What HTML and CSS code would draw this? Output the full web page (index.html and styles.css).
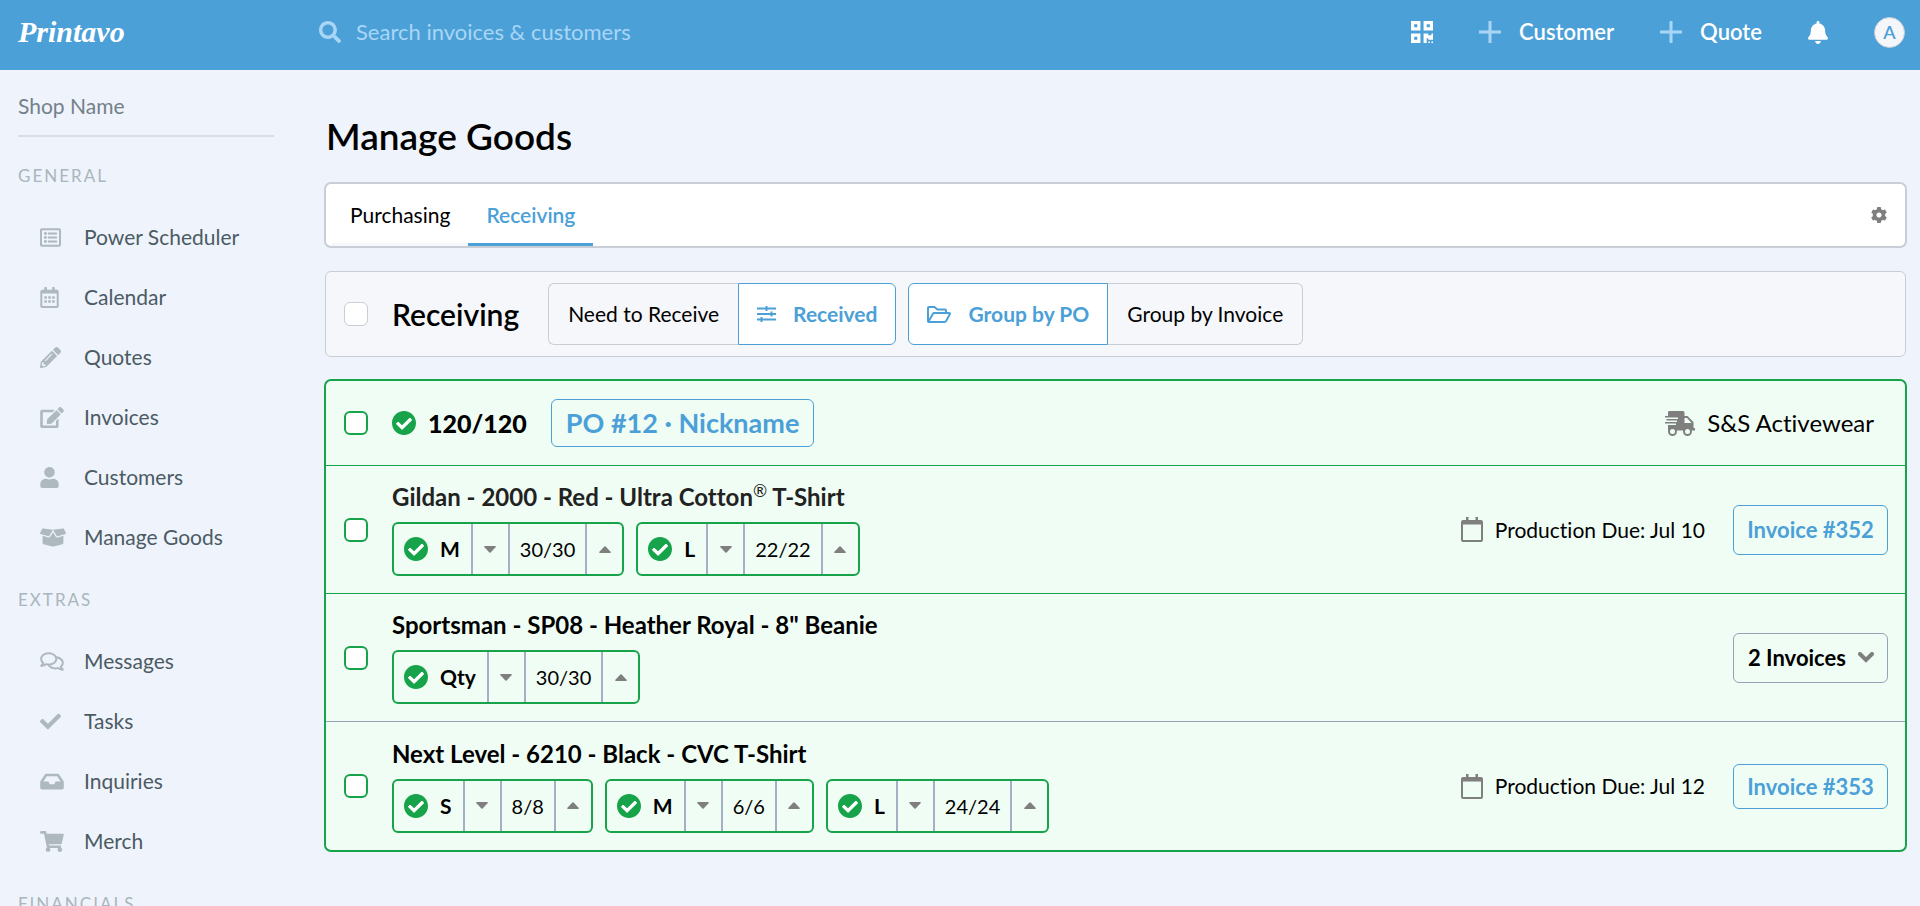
FILE: index.html
```html
<!DOCTYPE html>
<html lang="en">
<head>
<meta charset="utf-8">
<title>Manage Goods</title>
<link rel="stylesheet" href="styles.css">
</head>
<body>
<svg class="sprite" aria-hidden="true">
  <symbol id="check-circle" viewBox="8 8 496 496"><path d="M504 256c0 136.967-111.033 248-248 248S8 392.967 8 256 119.033 8 256 8s248 111.033 248 248zM227.314 387.314l184-184c6.248-6.248 6.248-16.379 0-22.627l-22.627-22.627c-6.248-6.249-16.379-6.249-22.628 0L216 308.118l-70.059-70.059c-6.248-6.248-16.379-6.248-22.628 0l-22.627 22.627c-6.248 6.248-6.248 16.379 0 22.627l104 104c6.249 6.249 16.379 6.249 22.628.001z"/><path fill="#fff" d="M227.314 387.314l184-184c6.248-6.248 6.248-16.379 0-22.627l-22.627-22.627c-6.248-6.249-16.379-6.249-22.628 0L216 308.118l-70.059-70.059c-6.248-6.248-16.379-6.248-22.628 0l-22.627 22.627c-6.248 6.248-6.248 16.379 0 22.627l104 104c6.249 6.249 16.379 6.249 22.628.001z"/></symbol>
  <symbol id="calendar" viewBox="0 0 22 25"><path fill-rule="evenodd" d="M5 0h2.500v3h7V0H17v3h3a2 2 0 0 1 2 2v18a2 2 0 0 1-2 2H2a2 2 0 0 1-2-2V5a2 2 0 0 1 2-2h3zM2 7.500V23h18V7.500z"/></symbol>
  <symbol id="plus" viewBox="0 0 22 22"><path d="M9.500 0h3v9.500H22v3h-9.500V22h-3v-9.500H0v-3h9.500z"/></symbol>
  <symbol id="down" viewBox="0 0 12 7"><path d="M1 0h10c.8 0 1.200.8.6 1.300L6.600 6.600a.9.9 0 0 1-1.200 0L.4 1.300C-.2.8.2 0 1 0z"/></symbol>
  <symbol id="up" viewBox="0 0 12 7"><path d="M1 7h10c.8 0 1.200-.8.6-1.300L6.600.4a.9.9 0 0 0-1.200 0l-5 5.300C-.2 6.200.2 7 1 7z"/></symbol>
</svg>

<header class="topbar">
  <a class="logo" href="#">Printavo</a>
  <label class="search">
    <svg class="search-icon" viewBox="0 0 512 512" aria-hidden="true"><path d="M505 442.7L405.300 343c-4.500-4.500-10.600-7-17-7H372c27.600-35.300 44-79.700 44-128C416 93.100 322.900 0 208 0S0 93.100 0 208s93.100 208 208 208c48.300 0 92.700-16.400 128-44v16.300c0 6.400 2.500 12.500 7 17l99.700 99.700c9.400 9.400 24.600 9.400 33.900 0l28.300-28.300c9.400-9.400 9.400-24.600.1-34zM208 336c-70.700 0-128-57.200-128-128 0-70.700 57.200-128 128-128 70.700 0 128 57.200 128 128 0 70.700-57.200 128-128 128z"/></svg>
    <input type="search" placeholder="Search invoices &amp; customers" aria-label="Search invoices and customers">
  </label>
  <nav class="actions" aria-label="Quick actions">
    <button class="icon-button" aria-label="Scan code"><svg class="qr" viewBox="0 32 448 448"><path d="M0 224h192V32H0v192zM64 96h64v64H64V96zm192-64v192h192V32H256zm128 128h-64V96h64v64zM0 480h192V288H0v192zm64-128h64v64H64v-64zm352-64h32v128h-96v-32h-32v96h-64V288h96v32h64v-32zm0 160h32v32h-32v-32zm-64 0h32v32h-32v-32z"/></svg></button>
    <a class="create" href="#"><svg class="plus"><use href="#plus"/></svg>Customer</a>
    <a class="create" href="#"><svg class="plus"><use href="#plus"/></svg>Quote</a>
    <button class="icon-button" aria-label="Notifications"><svg class="bell" viewBox="0 0 448 512"><path d="M224 512c35.320 0 63.970-28.650 63.970-64H160.030c0 35.350 28.650 64 63.970 64zm215.390-149.710c-19.320-20.760-55.470-51.990-55.470-154.290 0-77.700-54.480-139.900-127.940-155.160V32c0-17.670-14.320-32-31.980-32s-31.980 14.330-31.980 32v20.840C118.560 68.100 64.080 130.300 64.080 208c0 102.300-36.150 133.530-55.470 154.290-6 6.450-8.660 14.160-8.610 21.710.11 16.400 12.980 32 32.100 32h383.800c19.120 0 32-15.600 32.100-32 .05-7.550-2.610-15.270-8.610-21.710z"/></svg></button>
    <button class="avatar" aria-label="Account">A</button>
  </nav>
</header>

<div class="shell">
  <aside class="sidebar">
    <p class="shop">Shop Name</p>
    <nav aria-label="Main">
      <h2 class="group-label">General</h2>
      <ul class="menu">
        <li><a href="#"><svg class="i-512" viewBox="0 0 512 512"><path d="M464 32H48C21.490 32 0 53.490 0 80v352c0 26.510 21.490 48 48 48h416c26.510 0 48-21.490 48-48V80c0-26.510-21.490-48-48-48zm-6 400H54a6 6 0 0 1-6-6V86a6 6 0 0 1 6-6h404a6 6 0 0 1 6 6v340a6 6 0 0 1-6 6z"/><path d="M204 136h200a12 12 0 0 1 12 12v24a12 12 0 0 1-12 12H204a12 12 0 0 1-12-12v-24a12 12 0 0 1 12-12zM204 232h200a12 12 0 0 1 12 12v24a12 12 0 0 1-12 12H204a12 12 0 0 1-12-12v-24a12 12 0 0 1 12-12zM204 328h200a12 12 0 0 1 12 12v24a12 12 0 0 1-12 12H204a12 12 0 0 1-12-12v-24a12 12 0 0 1 12-12z"/><circle cx="132" cy="160" r="36"/><circle cx="132" cy="256" r="36"/><circle cx="132" cy="352" r="36"/></svg>Power Scheduler</a></li>
        <li><a href="#"><svg class="i-448" viewBox="0 0 448 512"><path d="M448 112v352c0 26.500-21.500 48-48 48H48c-26.500 0-48-21.500-48-48V112c0-26.500 21.500-48 48-48h48V12c0-6.600 5.400-12 12-12h40c6.600 0 12 5.400 12 12v52h128V12c0-6.600 5.400-12 12-12h40c6.600 0 12 5.400 12 12v52h48c26.500 0 48 21.500 48 48zm-48 346V160H48v298c0 3.300 2.700 6 6 6h340c3.300 0 6-2.700 6-6z"/><g><rect x="96" y="224" width="64" height="64" rx="12"/><rect x="192" y="224" width="64" height="64" rx="12"/><rect x="288" y="224" width="64" height="64" rx="12"/><rect x="96" y="320" width="64" height="64" rx="12"/><rect x="192" y="320" width="64" height="64" rx="12"/><rect x="288" y="320" width="64" height="64" rx="12"/></g></svg>Calendar</a></li>
        <li><a href="#"><svg class="i-512" viewBox="0 0 512 512"><path d="M497.900 142.100l-46.100 46.100c-4.700 4.700-12.300 4.700-17 0l-111-111c-4.700-4.700-4.700-12.300 0-17l46.100-46.100c18.700-18.700 49.100-18.700 67.900 0l60.100 60.100c18.800 18.700 18.800 49.100 0 67.900zM284.200 99.800L21.600 362.400.4 483.900c-2.900 16.400 11.400 30.600 27.800 27.800l121.500-21.300 262.600-262.600c4.700-4.700 4.700-12.300 0-17l-111-111c-4.800-4.700-12.400-4.700-17.100 0zM124.100 339.900c-5.500-5.500-5.500-14.300 0-19.800l154-154c5.500-5.500 14.300-5.500 19.800 0s5.500 14.300 0 19.800l-154 154c-5.500 5.500-14.300 5.500-19.800 0zM88 424h48v36.300l-64.500 11.300-31.100-31.100L51.700 376H88v48z"/></svg>Quotes</a></li>
        <li><a href="#"><svg class="i-576" viewBox="0 0 576 512"><path d="M402.600 83.200l90.200 90.200c3.800 3.800 3.800 10 0 13.800L274.400 405.600l-92.800 10.300c-12.400 1.400-22.900-9.100-21.500-21.500l10.300-92.800L388.800 83.200c3.800-3.800 10-3.800 13.800 0zm162-22.900l-48.800-48.800c-15.200-15.200-39.900-15.200-55.200 0l-35.400 35.400c-3.800 3.800-3.800 10 0 13.800l90.200 90.200c3.800 3.800 10 3.800 13.800 0l35.400-35.400c15.200-15.300 15.200-40 0-55.200zM384 346.200V448H64V128h229.800c3.200 0 6.200-1.300 8.500-3.500l40-40c7.600-7.600 2.200-20.500-8.500-20.500H48C21.500 64 0 85.500 0 112v352c0 26.500 21.500 48 48 48h352c26.500 0 48-21.500 48-48V306.200c0-10.700-12.900-16-20.500-8.500l-40 40c-2.200 2.300-3.500 5.300-3.500 8.500z"/></svg>Invoices</a></li>
        <li><a href="#"><svg class="i-448" viewBox="0 0 448 512"><path d="M224 256c70.700 0 128-57.300 128-128S294.700 0 224 0 96 57.300 96 128s57.300 128 128 128zm89.600 32h-16.700c-22.200 10.200-46.900 16-72.900 16s-50.600-5.800-72.900-16h-16.700C60.200 288 0 348.200 0 422.400V464c0 26.500 21.500 48 48 48h352c26.500 0 48-21.500 48-48v-41.600c0-74.200-60.200-134.400-134.400-134.400z"/></svg>Customers</a></li>
        <li><a href="#"><svg class="i-640" viewBox="0 0 640 512"><path d="M425.700 256c-16.900 0-32.800-9-41.400-23.400L320 126l-64.200 106.600c-8.700 14.500-24.600 23.500-41.500 23.500-4.500 0-9-.6-13.300-1.900L64 215v178c0 14.700 10 27.500 24.200 31l216.200 54.100c10.200 2.500 20.900 2.500 31 0L551.800 424c14.200-3.600 24.200-16.400 24.200-31V215l-137 39.100c-4.300 1.300-8.800 1.900-13.300 1.900zm212.600-112.200L586.800 41c-3.100-6.200-9.800-9.800-16.700-8.900L320 64l91.700 152.100c3.800 6.300 11.400 9.300 18.500 7.300l197.900-56.500c9.900-2.900 14.700-13.900 10.200-23.100zM53.200 41L1.700 143.800c-4.600 9.200.3 20.200 10.100 23l197.900 56.500c7.100 2 14.700-1 18.500-7.300L320 64 69.800 32.100c-6.900-.8-13.500 2.700-16.600 8.900z"/></svg>Manage Goods</a></li>
      </ul>
      <h2 class="group-label">Extras</h2>
      <ul class="menu">
        <li><a href="#"><svg class="i-576" viewBox="0 0 576 512"><path d="M532 386.200c27.500-27.100 44-61.100 44-98.200 0-80-76.500-146.100-176.200-157.900C368.300 72.500 294.300 32 208 32 93.100 32 0 103.600 0 192c0 37 16.500 71 44 98.200-15.300 30.700-37.300 54.500-37.700 54.900-6.300 6.700-8.100 16.500-4.400 25 3.600 8.500 12 14 21.200 14 53.500 0 96.700-20.200 125.200-38.800 9.200 2.100 18.700 3.700 28.400 4.900C208.100 407.600 281.800 448 368 448c20.800 0 40.800-2.400 59.800-6.800C456.300 459.700 499.400 480 553 480c9.200 0 17.500-5.500 21.200-14 3.600-8.500 1.900-18.300-4.400-25-.4-.3-22.500-24.100-37.800-54.800zm-392.800-92.300L122.100 305c-14.100 9.100-28.500 16.300-43.100 21.400 2.700-4.700 5.400-9.700 8-14.800l15.500-31.100L77.700 256C64.200 242.600 48 220.700 48 192c0-60.700 73.300-112 160-112s160 51.300 160 112-73.300 112-160 112c-16.500 0-33-1.900-49-5.600l-19.800-4.500zM498.300 352l-24.700 24.400 15.500 31.100c2.600 5.100 5.300 10.100 8 14.800-14.600-5.100-29-12.300-43.100-21.400l-17.100-11.100-19.900 4.600c-16 3.700-32.500 5.600-49 5.600-54 0-102.200-20.100-131.300-49.700C338 339.500 416 272.900 416 192c0-3.400-.4-6.700-.7-10C479.700 196.500 528 238.800 528 288c0 28.700-16.200 50.600-29.700 64z"/></svg>Messages</a></li>
        <li><a href="#"><svg class="i-512" viewBox="0 0 512 512"><path d="M173.898 439.404l-166.400-166.400c-9.997-9.997-9.997-26.206 0-36.204l36.203-36.204c9.997-9.998 26.207-9.998 36.204 0L192 312.690 432.095 72.596c9.997-9.997 26.207-9.997 36.204 0l36.203 36.204c9.997 9.997 9.997 26.206 0 36.204l-294.400 294.401c-9.998 9.997-26.207 9.997-36.204-.001z"/></svg>Tasks</a></li>
        <li><a href="#"><svg class="i-576" viewBox="0 0 576 512"><path d="M567.938 243.908L462.250 85.374A48.003 48.003 0 0 0 422.311 64H153.689a48 48 0 0 0-39.938 21.374L8.062 243.908A47.994 47.994 0 0 0 0 270.533V400c0 26.510 21.490 48 48 48h480c26.510 0 48-21.490 48-48V270.533a47.994 47.994 0 0 0-8.062-26.625zM162.252 128h251.497l85.333 128H376l-32 64H232l-32-64H76.918l85.334-128z"/></svg>Inquiries</a></li>
        <li><a href="#"><svg class="i-576" viewBox="0 0 576 512"><path d="M528.120 301.319l47.273-208C578.806 78.301 567.391 64 551.990 64H159.208l-9.166-44.810C147.758 8.021 137.930 0 126.529 0H24C10.745 0 0 10.745 0 24v16c0 13.255 10.745 24 24 24h69.883l70.248 343.435C147.325 417.100 136 435.222 136 456c0 30.928 25.072 56 56 56s56-25.072 56-56c0-15.674-6.447-29.835-16.824-40h209.647C430.447 426.165 424 440.326 424 456c0 30.928 25.072 56 56 56s56-25.072 56-56c0-22.172-12.888-41.332-31.579-50.405l5.517-24.276c3.413-15.018-8.002-29.319-23.403-29.319H218.117l-6.545-32h293.145c11.206 0 20.920-7.754 23.403-18.681z"/></svg>Merch</a></li>
      </ul>
      <h2 class="group-label">Financials</h2>
    </nav>
  </aside>

  <main class="content">
    <h1 class="title">Manage Goods</h1>

    <nav class="tabs" aria-label="Goods">
      <a class="tab" href="#">Purchasing</a>
      <a class="tab tab-active" href="#" aria-current="page">Receiving</a>
      <button class="settings" aria-label="Settings"><svg class="cog" viewBox="8 8 496 496"><path d="M487.400 315.700l-42.600-24.600c4.300-23.200 4.300-47 0-70.200l42.600-24.600c4.900-2.800 7.100-8.600 5.500-14-11.100-35.600-30-67.800-54.700-94.600-3.800-4.100-10-5.100-14.800-2.300L380.800 110c-17.900-15.400-38.500-27.300-60.800-35.100V25.800c0-5.600-3.900-10.500-9.400-11.700-36.700-8.200-74.300-7.800-109.200 0-5.500 1.200-9.400 6.100-9.400 11.700V75c-22.200 7.900-42.800 19.800-60.800 35.100L88.700 85.500c-4.900-2.800-11-1.900-14.800 2.300-24.700 26.700-43.600 58.900-54.700 94.600-1.700 5.400.6 11.200 5.500 14L67.300 221c-4.300 23.200-4.300 47 0 70.200l-42.600 24.600c-4.900 2.800-7.100 8.600-5.500 14 11.100 35.600 30 67.800 54.700 94.600 3.800 4.100 10 5.100 14.800 2.300l42.600-24.600c17.900 15.400 38.500 27.300 60.800 35.100v49.200c0 5.600 3.900 10.500 9.400 11.700 36.700 8.200 74.300 7.800 109.200 0 5.500-1.200 9.400-6.100 9.400-11.700v-49.200c22.200-7.900 42.800-19.800 60.800-35.100l42.600 24.600c4.900 2.800 11 1.900 14.800-2.300 24.700-26.700 43.600-58.900 54.700-94.600 1.500-5.500-.7-11.300-5.600-14.100zM256 336c-44.100 0-80-35.900-80-80s35.900-80 80-80 80 35.900 80 80-35.900 80-80 80z"/></svg></button>
    </nav>

    <section class="toolbar" aria-label="Filters">
      <input class="box" type="checkbox" aria-label="Select all">
      <h2 class="toolbar-title">Receiving</h2>
      <div class="toggles">
        <div class="toggle">
          <button class="option">Need to Receive</button>
          <button class="option option-on" aria-pressed="true"><svg class="sliders" viewBox="0 0 19 16"><path d="M0 1.500h19v2H0zM0 7h19v2H0zM0 12.500h19v2H0zM8.500 0h2v5h-2zM13.500 5.500h2v5h-2zM3.500 11h2v5h-2z"/></svg>Received</button>
        </div>
        <div class="toggle">
          <button class="option option-on" aria-pressed="true"><svg class="folder" viewBox="0 0 24 17"><path d="M1 15V2a1 1 0 0 1 1-1h5.500l3 2.500H18a1 1 0 0 1 1 1V7M1.500 15.500L6 7.700A1.500 1.500 0 0 1 7.200 7H22.300a.7.7 0 0 1 .6 1l-3.800 7a2 2 0 0 1-1.700 1H1.800A.8.8 0 0 1 1 15"/></svg>Group by PO</button>
          <button class="option">Group by Invoice</button>
        </div>
      </div>
    </section>

    <section class="order" aria-label="PO #12">
      <header class="row row-head">
        <input class="box box-done" type="checkbox" aria-label="Select PO #12">
        <div class="summary">
          <svg class="done"><use href="#check-circle"/></svg>
          <strong class="total">120/120</strong>
          <a class="po" href="#">PO #12 · Nickname</a>
        </div>
        <div class="vendor"><svg class="truck" viewBox="0 0 30 25"><path fill-rule="evenodd" d="M5 0h13a1.500 1.500 0 0 1 1.500 1.500V5h3l6 6v6h1.500v2.500H3V14h8v-1.500H0V11h12V9.500H1.500V8H13V6.500H0V5h3V1.500A1.500 1.500 0 0 1 5 0zM19.500 7v5h7l-4.500-5z"/><circle cx="7.500" cy="20.500" r="4.500"/><circle cx="22.500" cy="20.500" r="4.500"/><circle class="hub" cx="7.500" cy="20.500" r="2.500"/><circle class="hub" cx="22.500" cy="20.500" r="2.500"/></svg>S&amp;S Activewear</div>
      </header>

      <article class="row">
        <input class="box box-done" type="checkbox" aria-label="Select Gildan 2000">
        <div class="item">
          <h3 class="item-name item-name-soft">Gildan - 2000 - Red - Ultra Cotton<sup class="reg">®</sup> T-Shirt</h3>
          <div class="sizes">
            <div class="size"><span class="size-label"><svg class="done"><use href="#check-circle"/></svg>M</span><button class="step" aria-label="Fewer M"><svg class="arrow"><use href="#down"/></svg></button><span class="count">30/30</span><button class="step" aria-label="More M"><svg class="arrow"><use href="#up"/></svg></button></div>
            <div class="size"><span class="size-label"><svg class="done"><use href="#check-circle"/></svg>L</span><button class="step" aria-label="Fewer L"><svg class="arrow"><use href="#down"/></svg></button><span class="count">22/22</span><button class="step" aria-label="More L"><svg class="arrow"><use href="#up"/></svg></button></div>
          </div>
        </div>
        <div class="due"><svg class="calendar"><use href="#calendar"/></svg>Production Due: Jul 10</div>
        <a class="invoice" href="#">Invoice #352</a>
      </article>

      <article class="row">
        <input class="box box-done" type="checkbox" aria-label="Select Sportsman SP08">
        <div class="item">
          <h3 class="item-name">Sportsman - SP08 - Heather Royal - 8" Beanie</h3>
          <div class="sizes">
            <div class="size"><span class="size-label"><svg class="done"><use href="#check-circle"/></svg>Qty</span><button class="step" aria-label="Fewer"><svg class="arrow"><use href="#down"/></svg></button><span class="count">30/30</span><button class="step" aria-label="More"><svg class="arrow"><use href="#up"/></svg></button></div>
          </div>
        </div>
        <div class="picker">
          <select class="invoice invoice-select" aria-label="Invoices"><option>2 Invoices</option></select>
          <svg class="chevron" viewBox="0 0 16 11" aria-hidden="true"><path d="M2 2l6 6 6-6"/></svg>
        </div>
      </article>

      <article class="row row-muted">
        <input class="box box-done" type="checkbox" aria-label="Select Next Level 6210">
        <div class="item">
          <h3 class="item-name">Next Level - 6210 - Black - CVC T-Shirt</h3>
          <div class="sizes">
            <div class="size"><span class="size-label"><svg class="done"><use href="#check-circle"/></svg>S</span><button class="step" aria-label="Fewer S"><svg class="arrow"><use href="#down"/></svg></button><span class="count">8/8</span><button class="step" aria-label="More S"><svg class="arrow"><use href="#up"/></svg></button></div>
            <div class="size"><span class="size-label"><svg class="done"><use href="#check-circle"/></svg>M</span><button class="step" aria-label="Fewer M"><svg class="arrow"><use href="#down"/></svg></button><span class="count">6/6</span><button class="step" aria-label="More M"><svg class="arrow"><use href="#up"/></svg></button></div>
            <div class="size"><span class="size-label"><svg class="done"><use href="#check-circle"/></svg>L</span><button class="step" aria-label="Fewer L"><svg class="arrow"><use href="#down"/></svg></button><span class="count">24/24</span><button class="step" aria-label="More L"><svg class="arrow"><use href="#up"/></svg></button></div>
          </div>
        </div>
        <div class="due"><svg class="calendar"><use href="#calendar"/></svg>Production Due: Jul 12</div>
        <a class="invoice invoice-short" href="#">Invoice #353</a>
      </article>
    </section>
  </main>
</div>
</body>
</html>
```
FILE: styles.css
```css
:root {
  --blue: #4ba0d8;
  --green: #16a34a;
  --line: #c9cdd6;
  --slate: #94a3b8;
}

* { box-sizing: border-box; }

html, body { height: 100%; }

body {
  margin: 0;
  display: flex;
  flex-direction: column;
  overflow: hidden;
  background: #eff3fb;
  color: #000;
  font: 21px/28px Lato, "Open Sans", sans-serif;
  font-variant-ligatures: none;
}

h1, h2, h3, p, ul { margin: 0; padding: 0; }
ul { list-style: none; }
a { color: inherit; text-decoration: none; }
button, input, select { font: inherit; color: inherit; margin: 0; }
button { padding: 0; border: 0; background: none; cursor: pointer; }
svg { display: block; flex: none; fill: currentColor; }
.sprite { position: absolute; width: 0; height: 0; }

/* Top bar */
.topbar {
  flex: none;
  display: flex;
  align-items: center;
  height: 70px;
  padding: 0 15px 6px 18px;
  background: var(--blue);
  color: #fff;
}
.logo {
  width: 301px;
  font: italic bold 30px/32px "Liberation Serif", serif;
}
.search { flex: 1; display: flex; align-items: center; gap: 15px; color: #a9d6f5; font-size: 22px; }
.search-icon { width: 22px; height: 22px; }
.search input {
  flex: 1;
  padding: 0;
  border: 0;
  outline: 0;
  background: none;
}
.search input::placeholder { color: inherit; opacity: 1; }
.actions { display: flex; align-items: center; font-size: 22px; font-weight: 600; }
.qr { width: 22px; height: 22px; }
.create { display: flex; align-items: center; gap: 18px; margin-left: 46px; }
.plus { width: 22px; height: 22px; color: #a9d6f5; }
.bell { width: 20px; height: 23px; }
.actions .icon-button + .avatar { margin-left: 46px; }
.create + .icon-button { margin-left: 46px; }
.avatar {
  width: 31px;
  height: 31px;
  border: 1px solid #c9cdd6;
  border-radius: 50%;
  background: #f5f6fa;
  color: var(--blue);
  font-size: 18px;
  line-height: 28px;
  font-weight: 600;
}

/* Page frame */
.shell { flex: 1; min-height: 0; display: flex; }
.sidebar { flex: none; width: 274px; padding-left: 18px; color: #4b5b64; }
.shop {
  height: 67px;
  padding-top: 22px;
  border-bottom: 2px solid #d9dee5;
  color: #73818a;
}
.group-label {
  height: 62px;
  color: #a9b6bd;
  font-size: 17px;
  line-height: 62px;
  font-weight: 400;
  letter-spacing: 2px;
  text-transform: uppercase;
}
.shop + nav { padding-top: 8px; }
.menu { padding-bottom: 2px; }
.menu a { display: grid; grid-template-columns: 44px 1fr; align-items: center; height: 60px; padding-left: 22px; }
.menu svg { height: 21px; color: #adb9be; }
.i-448 { width: 19px; }
.i-512 { width: 21px; }
.i-576 { width: 24px; }
.i-640 { width: 26px; }

.content { flex: 1; min-width: 0; padding: 42px 13px 0 50px; }
.title { padding-left: 2px; font-size: 37px; line-height: 48px; font-weight: 600; }

/* Tabs */
.tabs {
  display: flex;
  height: 66px;
  margin-top: 22px;
  padding: 0 18px 0 6px;
  border: 2px solid var(--line);
  border-radius: 7px;
  background: #fff;
}
.tab { padding: 0 18px; border-bottom: 3px solid #f6f7fb; line-height: 62px; }
.tab-active { border-color: var(--blue); color: var(--blue); font-weight: 600; }
.settings { margin-left: auto; color: #7f7f7f; }
.cog { width: 16px; height: 16px; }

/* Toolbar */
.toolbar {
  display: flex;
  align-items: center;
  height: 86px;
  margin: 23px 1px 0;
  padding: 0 18px;
  border: 1px solid var(--line);
  border-radius: 6px;
  background: #f6f7fb;
}
.box {
  appearance: none;
  flex: none;
  width: 24px;
  height: 24px;
  border: 1px solid var(--line);
  border-radius: 6px;
  background: #fff;
}
.box-done { border: 2px solid var(--green); }
.toolbar-title { margin: 0 29px 0 24px; font-size: 30px; line-height: 36px; font-weight: 600; }
.toggles { display: flex; gap: 12px; }
.toggle { display: flex; }
.option {
  display: flex;
  align-items: center;
  height: 62px;
  padding: 0 19px;
  border: 1px solid var(--line);
}
.option:first-child { border-radius: 6px 0 0 6px; }
.option:last-child { border-radius: 0 6px 6px 0; }
.option:first-child:not(.option-on) { border-right: 0; }
.option:last-child:not(.option-on) { border-left: 0; }
.option-on { gap: 17px; padding: 0 18px; border-color: var(--blue); background: #fff; color: var(--blue); font-weight: 700; }
.sliders { width: 19px; height: 16px; }
.folder { width: 24px; height: 17px; fill: none; stroke: currentColor; stroke-width: 2; }

/* Purchase order */
.order {
  margin-top: 22px;
  border: 2px solid var(--green);
  border-radius: 7px;
  background: #f0fdf4;
}
.row { display: flex; align-items: center; height: 128px; padding: 0 17px 0 18px; }
.row + .row { border-top: 1px solid var(--green); }
.row + .row-muted { height: 129px; border-color: var(--slate); }
.row-head { height: 84px; padding-right: 31px; }
.summary { flex: 1; display: flex; align-items: center; margin-left: 24px; font-size: 27px; line-height: 36px; font-weight: 700; }
.done { width: 24px; height: 24px; color: var(--green); }
.total { margin: 0 24px 0 12px; font-size: 25px; }
.po { padding: 5px 14px; border: 1px solid var(--blue); border-radius: 6px; color: var(--blue); }
.vendor { display: flex; align-items: center; gap: 12px; font-size: 24px; }
.truck { width: 30px; height: 25px; color: #7f7f7f; }
.hub { fill: #f0fdf4; }

.item { flex: 1; margin-left: 24px; padding-bottom: 1px; }
.item-name { font-size: 24px; line-height: 30px; font-weight: 700; }
.item-name-soft { color: #222; }
.reg { font-size: 17px; line-height: 0; font-weight: 400; }
.sizes { display: flex; gap: 12px; margin-top: 10px; }
.size { display: flex; height: 54px; border: 2px solid var(--green); border-radius: 6px; }
.size > * { display: flex; align-items: center; }
.size > * + * { border-left: 2px solid #a3b0c4; }
.size-label { gap: 12px; padding: 0 11px 0 10px; font-weight: 700; }
.step { justify-content: center; width: 37px; color: #7f7f7f; }
.arrow { width: 12px; height: 7px; }
.count { padding: 0 10px; font-size: 20px; }

.due { display: flex; align-items: center; gap: 12px; margin-right: 28px; }
.calendar { width: 22px; height: 25px; color: #7f7f7f; }
.invoice {
  width: 155px;
  height: 50px;
  border: 1px solid var(--blue);
  border-radius: 6px;
  color: var(--blue);
  font-size: 22px;
  line-height: 48px;
  font-weight: 700;
  text-align: center;
}
.invoice-short { height: 45px; line-height: 43px; }
.picker { display: grid; align-items: center; }
.picker > * { grid-area: 1 / 1; }
.invoice-select {
  appearance: none;
  padding: 0 36px 0 14px;
  border-color: var(--slate);
  background: none;
  color: #000;
  text-align: left;
}
.chevron {
  justify-self: end;
  width: 16px;
  height: 11px;
  margin-right: 14px;
  fill: none;
  stroke: #7f7f7f;
  stroke-width: 4;
  stroke-linecap: round;
  pointer-events: none;
}
```
